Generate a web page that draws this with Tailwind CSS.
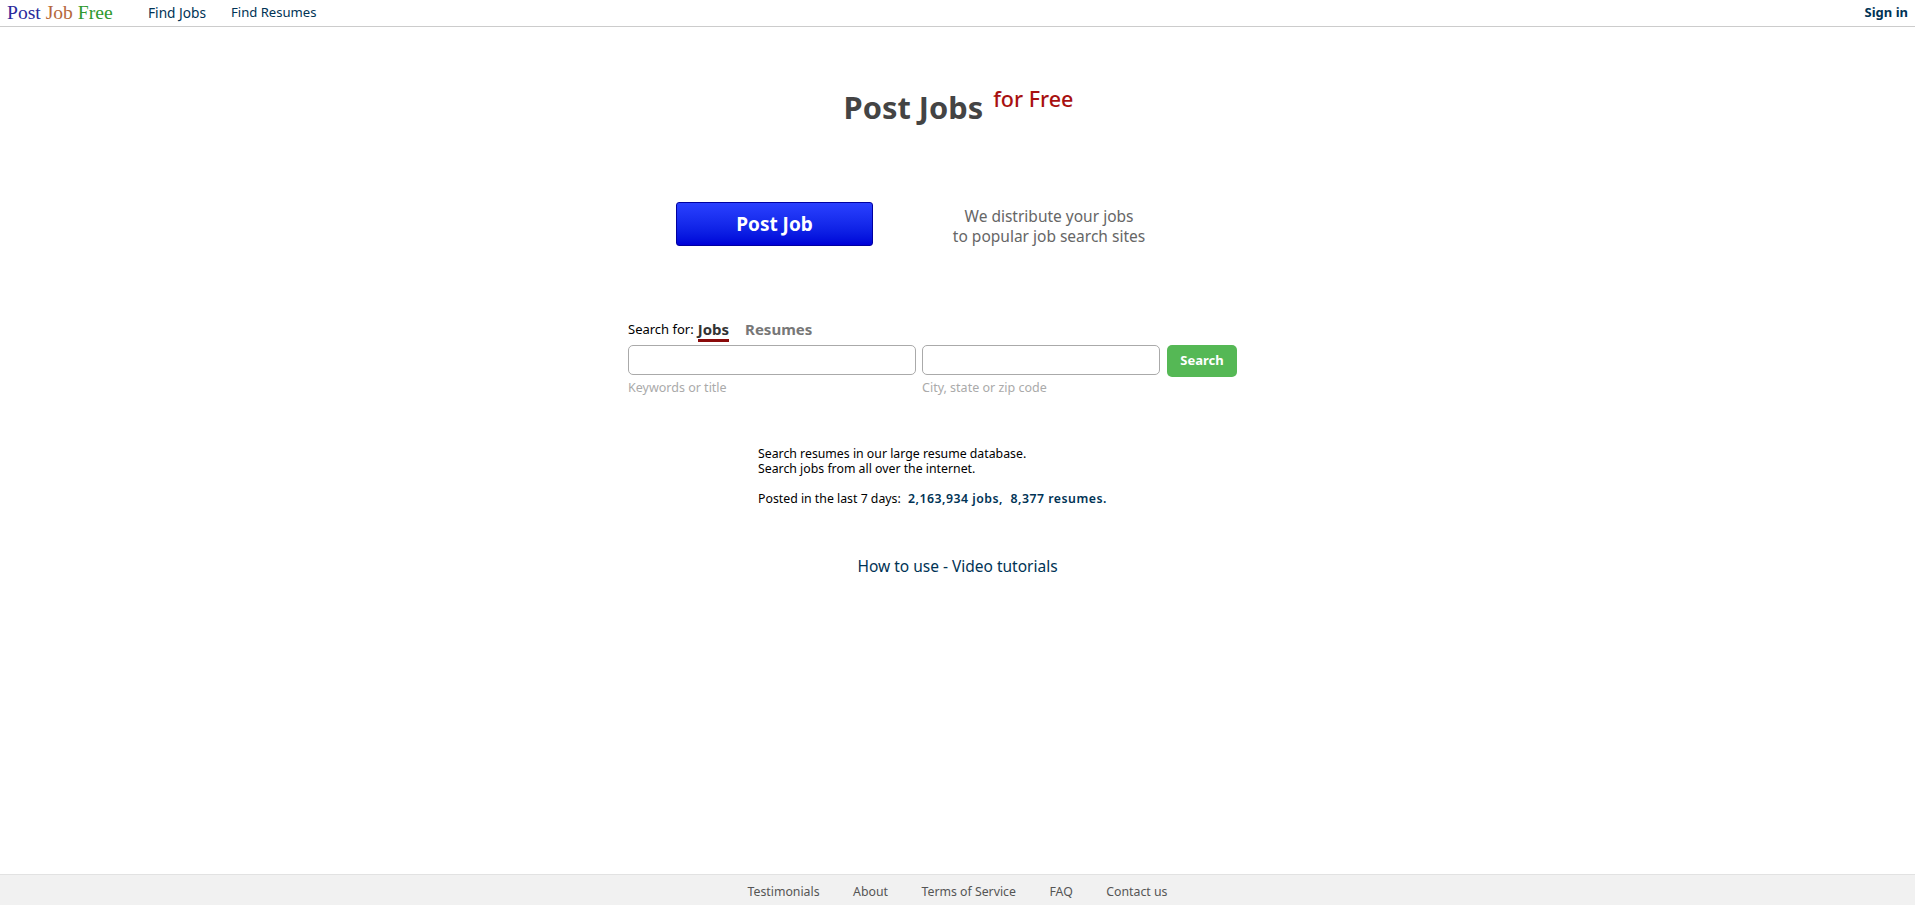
<!DOCTYPE html>
<html lang="en">
<head>
    <meta charset="UTF-8">
    <title>Post Job Free</title>
    <script src="https://cdn.jsdelivr.net/npm/@tailwindcss/browser@4"></script>
</head>
<body class="bg-white text-black font-['Noto_Sans',sans-serif] text-[13px] antialiased">
<div class="flex flex-col h-[905px] overflow-hidden">

    <header class="flex items-center h-[27px] border-b border-[#cccccc] pl-[7px] pr-[7px] shrink-0">
        <a href="#" class="w-[141px] font-['Liberation_Serif',serif] text-[19.6px] leading-none whitespace-pre"><span class="text-[#2a2a9c]">Post</span> <span class="text-[#b5673a]">Job</span> <span class="text-[#2f9a2f]">Free</span></a>
        <a href="#" class="w-[83px] text-[13.7px] text-[#003355]">Find Jobs</a>
        <a href="#" class="text-[13.1px] text-[#003355]">Find Resumes</a>
        <a href="#" class="ml-auto text-[13px] font-bold text-[#003355]">Sign in</a>
    </header>

    <main class="flex-1">
        <h1 class="mt-[52px] ml-[2px] text-center font-bold text-[30.8px] leading-[40px] text-[#444444]">Post Jobs <span class="align-[12px] ml-[2px] font-medium text-[21.5px] text-[#a81010]">for Free</span></h1>

        <div class="flex items-center ml-[676px] mt-[75px]">
            <a href="#" class="flex items-center justify-center w-[197px] h-[44px] rounded-[3px] border border-[#0000a0] bg-gradient-to-b from-[#2a40ff] to-[#0000d8] text-white font-bold text-[19px]">Post Job</a>
            <p class="w-[300px] text-center text-[15.5px] leading-[19.5px] text-[#666666] ml-[26px] mt-[5px]">We distribute your jobs<br>to popular job search sites</p>
        </div>

        <form class="ml-[628px] mt-[69px] w-[612px]">
            <div class="flex items-center h-[29px]">
                <span class="text-[13px] mr-[4px] mt-[1px]">Search for:</span>
                <a href="#" class="font-bold text-[15px] leading-[20px] text-[#333333] border-b-[3px] border-[#8a0a0a] mr-[16px] mt-[2px]">Jobs</a>
                <a href="#" class="font-bold text-[15px] text-[#777777]">Resumes</a>
            </div>
            <div class="flex items-start gap-[6px] mt-[1px]">
                <div class="w-[288px]">
                    <input type="text" class="block w-full h-[30px] rounded-[5px] border border-[#aaaaaa] bg-white">
                    <div class="mt-[4px] text-[12.5px] text-[#aaaaaa]">Keywords or title</div>
                </div>
                <div class="w-[238px]">
                    <input type="text" class="block w-full h-[30px] rounded-[5px] border border-[#aaaaaa] bg-white">
                    <div class="mt-[4px] text-[12.5px] text-[#aaaaaa]">City, state or zip code</div>
                </div>
                <button type="button" class="w-[70px] h-[32px] ml-[1px] rounded-[5px] bg-[#55b855] text-white font-bold text-[13px]">Search</button>
            </div>
        </form>

        <div class="ml-[758px] mt-[48px] text-[12.3px] leading-[15px]">
            <p>Search resumes in our large resume database.</p>
            <p>Search jobs from all over the internet.</p>
            <p class="mt-[15px]">Posted in the last 7 days: <a href="#" class="ml-[4px] font-semibold tracking-[0.5px] text-[#003355] whitespace-pre">2,163,934 jobs,  8,377 resumes.</a></p>
        </div>

        <p class="mt-[49px] text-center text-[15.5px] text-[#003355]"><a href="#">How to use - Video tutorials</a></p>
    </main>

    <footer class="flex items-center justify-center gap-[33.5px] h-[31px] pt-[5px] shrink-0 bg-[#f1f1f1] border-t border-[#e2e2e2] text-[12.3px] text-[#555555]">
        <a href="#">Testimonials</a>
        <a href="#">About</a>
        <a href="#">Terms of Service</a>
        <a href="#">FAQ</a>
        <a href="#">Contact us</a>
    </footer>
</div>
</body>
</html>
